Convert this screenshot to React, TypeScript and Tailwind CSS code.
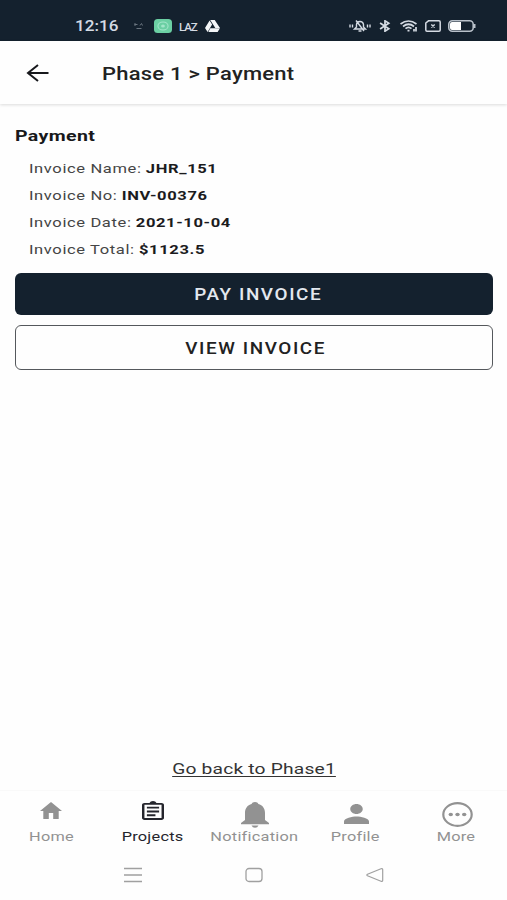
import type { ReactNode } from "react";

interface TabProps {
  label: string;
  active?: boolean;
  children: ReactNode;
}

const Tab = ({ label, active, children }: TabProps) => {
  return (
    <button
      className={`flex flex-1 flex-col items-center ${active ? "text-[#24252c]" : "text-[#929292]"}`}
    >
      <span className="flex h-[25px] items-start justify-center">{children}</span>
      <span className="flex h-5 w-full justify-center">
        <span className="scale-x-[1.21] text-[13.5px] leading-5 tracking-[0.2px] whitespace-nowrap">
          {label}
        </span>
      </span>
    </button>
  );
};

const details = [
  { label: "Invoice Name:", value: "JHR_151" },
  { label: "Invoice No:", value: "INV-00376" },
  { label: "Invoice Date:", value: "2021-10-04" },
  { label: "Invoice Total:", value: "$1123.5" },
];

const StatusBar = () => {
  return (
    <div className="flex h-[41px] items-center bg-[#14212e] pt-[11px] pl-[75px] text-[#d5dbe3]">
      <span className="w-[58px]">
        <span className="inline-block origin-left scale-x-[1.18] text-[14.5px] leading-none font-medium">
          12:16
        </span>
      </span>
      <svg className="h-2 w-3" viewBox="0 0 12 8" fill="none" stroke="#69747f">
        <path d="M1.5 2.5h3M2 1v3M7 3.5l1.500-2 1 2M3.500 6.500h5" />
      </svg>
      <svg className="ml-[9px] h-[14px] w-[18px]" viewBox="0 0 17 14" preserveAspectRatio="none">
        <rect width="17" height="14" rx="3.5" fill="#6bcfa3" />
        <ellipse cx="8.5" cy="7" rx="4.800" ry="4" fill="none" stroke="#a2e6ca" />
        <ellipse cx="8.5" cy="7" rx="1.800" ry="1.500" fill="#a2e6ca" />
      </svg>
      <span className="ml-[7px] w-[18px]">
        <span className="inline-block origin-left scale-x-[1.1] text-[10.500px] leading-none font-medium tracking-[-1px]">
          LAZ
        </span>
      </span>
      <svg className="ml-[8px] h-3 w-[15px]" viewBox="0 0 15 12" fill="#f4f6f8">
        <path d="M5.200 0h4.500L15 8h-4.700zM4.600.6l2.500 4L2.600 12 0 8.100zM5.300 8.300H15L12.600 12H3.400z" />
      </svg>
      <svg
        className="ml-[129px] h-3 w-[22px]"
        viewBox="0 0 22 12"
        fill="none"
        stroke="currentColor"
        strokeWidth="1.400"
      >
        <path d="M1 4.500v3M3.500 4.500v3M21 4.500v3M18.500 4.500v3M5.500 9h11L14.500 7V4.500Q14 1.500 11 1.500T7.500 4.500V7zM9.500 11h3M7 .5l8 10.500" />
      </svg>
      <svg
        className="ml-[8px] h-3 w-[12px]"
        viewBox="0 0 11 12"
        preserveAspectRatio="none"
        fill="none"
        stroke="currentColor"
        strokeWidth="1.600"
      >
        <path d="M1 3l8 5.800L5.500 11.200V.8L9 3.200 1 9" />
      </svg>
      <svg
        className="ml-[9px] h-3 w-[18px]"
        viewBox="0 0 18 12"
        fill="none"
        stroke="currentColor"
        strokeWidth="1.700"
      >
        <path d="M.5 4Q8.500-2 16.500 4M3 6.500Q8.500 2 14 6.500M5.500 8.700Q8.500 6 11.500 8.700" />
        <path d="M7.500 10.700h2M16 7v4.500M14 9v2.500" />
      </svg>
      <svg
        className="ml-[7px] h-3 w-4"
        viewBox="0 0 16 12"
        fill="none"
        stroke="currentColor"
        strokeWidth="1.500"
      >
        <path d="M3.500.8H14q1.200 0 1.200 1.200v8q0 1.200-1.200 1.200H2q-1.200 0-1.200-1.200V3zM6.300 4.500l3.400 3M9.700 4.500l-3.400 3" />
      </svg>
      <svg className="ml-[7px] h-3 w-7" viewBox="0 0 28 12" fill="none">
        <rect x=".8" y=".8" width="24.400" height="10.400" rx="3.500" stroke="#b9c1ca" strokeWidth="1.600" />
        <path d="M4 2h9v8H4q-2 0-2-2V4q0-2 2-2z" fill="#fff" />
        <path d="M26.600 4v4" stroke="#b9c1ca" strokeWidth="1.800" />
      </svg>
    </div>
  );
};

const Header = () => {
  return (
    <header className="flex h-[63px] items-center pl-[26px] shadow-[0_1px_3px_rgba(0,0,0,0.14)]">
      <svg
        className="h-[18px] w-[23px]"
        viewBox="0 0 23 18"
        fill="none"
        stroke="#17181c"
        strokeWidth="2"
      >
        <path d="M22.500 9H2M12 1L2 9l10 8" />
      </svg>
      <h1 className="ml-[53px] origin-left scale-x-[1.220] pt-px text-[18px] font-medium tracking-[0.200px] whitespace-nowrap text-[#222]">
        Phase 1 &gt; Payment
      </h1>
    </header>
  );
};

const TabBar = () => {
  return (
    <nav className="flex h-[60px] border-t border-[#f9f9f9] pt-[10px] pl-px">
      <Tab label="Home">
        <svg className="mt-px mr-px h-[17px] w-[22px]" viewBox="2 3 20 17" preserveAspectRatio="none" fill="currentColor">
          <path d="M10 20v-6h4v6h5v-8h3L12 3 2 12h3v8z" />
        </svg>
      </Tab>
      <Tab label="Projects" active>
        <svg className="h-[19px] w-[22px]" viewBox="3 1 18 20" preserveAspectRatio="none" fill="currentColor">
          <path d="M7 15h7v2H7zm0-4h10v2H7zm0-4h10v2H7zm12-4h-4.180C14.400 1.840 13.300 1 12 1s-2.400.84-2.820 2H5c-1.100 0-2 .9-2 2v14c0 1.100.9 2 2 2h14c1.100 0 2-.9 2-2V5c0-1.100-.9-2-2-2zm0 16H5V5h14z" />
        </svg>
      </Tab>
      <Tab label="Notification">
        <svg className="mt-px ml-[2px] h-[26px] w-[28px]" viewBox="0 0 28 26" fill="currentColor">
          <path d="M14 0c1.800 0 3 .8 3.400 2C21.500 3 24 6.500 24 11v7l4 3v1.300H0V21l4-3v-7c0-4.500 2.500-8 6.600-9 .4-1.200 1.600-2 3.400-2z" />
          <path d="M10.500 23.500h7q-1 2.300-3.500 2.300t-3.500-2.300z" />
        </svg>
      </Tab>
      <Tab label="Profile">
        <svg className="mt-[3px] ml-[2px] h-5 w-[25px]" viewBox="4 4 16 16" preserveAspectRatio="none" fill="currentColor">
          <path d="M12 12c2.210 0 4-1.790 4-4s-1.790-4-4-4-4 1.790-4 4 1.790 4 4 4zm0 2c-2.670 0-8 1.340-8 4v2h16v-2c0-2.660-5.330-4-8-4z" />
        </svg>
      </Tab>
      <Tab label="More">
        <svg className="mt-px ml-[3px] h-[25px] w-[31px]" viewBox="0 0 31 25" fill="none">
          <ellipse cx="15.500" cy="12.500" rx="14.200" ry="11.300" stroke="currentColor" strokeWidth="2.200" />
          <g fill="currentColor">
            <ellipse cx="8.800" cy="12.500" rx="2.200" ry="1.800" />
            <ellipse cx="15.500" cy="12.500" rx="2.200" ry="1.800" />
            <ellipse cx="22.200" cy="12.500" rx="2.200" ry="1.800" />
          </g>
        </svg>
      </Tab>
    </nav>
  );
};

const SystemNav = () => {
  return (
    <div className="flex h-[50px] items-center justify-center gap-[103px] text-[#a0a0a0]">
      <svg className="h-4 w-[18px]" viewBox="0 0 18 16" fill="none" stroke="currentColor" strokeWidth="1.300">
        <path d="M0 1.500h18M0 8h18M0 14.500h18" />
      </svg>
      <svg className="h-4 w-[18px]" viewBox="0 0 18 16" fill="none" stroke="currentColor" strokeWidth="1.300">
        <rect x="1" y="1.500" width="16" height="13" rx="3" />
      </svg>
      <svg className="h-4 w-[18px]" viewBox="0 0 18 16" fill="none" stroke="currentColor" strokeWidth="1.200">
        <path d="M1.500 7.200L15 1.700q1.700-.6 1.700 1v10.600q0 1.600-1.700 1L1.500 8.800q-1.300-.8 0-1.600z" />
      </svg>
    </div>
  );
};

const App = () => {
  return (
    <div className="flex h-[900px] w-[507px] flex-col overflow-hidden bg-[#fefefe] font-['Roboto','Liberation_Sans',sans-serif]">
      <StatusBar />
      <Header />
      <main className="flex flex-1 flex-col pt-[22px] pr-[14px] pl-[15px]">
        <h2 className="origin-left scale-x-[1.260] text-[15.500px] leading-5 font-bold tracking-[0.300px] text-[#17181a]">
          Payment
        </h2>
        <dl className="mt-[9px] ml-[14px] text-[13.500px] leading-[27px]">
          {details.map(({ label, value }) => (
            <div
              key={label}
              className="flex w-max origin-left scale-x-[1.225] gap-[3.500px] tracking-[0.500px]"
            >
              <dt className="text-[#454545]">{label}</dt>
              <dd className="font-bold text-[#1b1b1d]">{value}</dd>
            </div>
          ))}
        </dl>
        <button className="mt-[10px] flex h-[42px] items-center justify-center rounded-[6px] bg-[#14212e] pt-[2px] pl-[9px] text-[#e3e8ef]">
          <span className="scale-x-[1.180] text-[16px] font-medium tracking-[1.350px]">PAY INVOICE</span>
        </button>
        <button className="mt-[10px] flex h-[45px] items-center justify-center rounded-[6px] border-[1.500px] border-[#55585c] pt-[3px] pl-[4px] text-[#222]">
          <span className="scale-x-[1.180] text-[16px] font-medium tracking-[1.350px]">VIEW INVOICE</span>
        </button>
        <a
          href="#phase-1"
          className="mx-auto mt-auto mb-[11px] scale-x-[1.240] text-[15.500px] leading-5 tracking-[0.150px] text-[#333] underline underline-offset-2"
        >
          Go back to Phase1
        </a>
      </main>
      <TabBar />
      <SystemNav />
    </div>
  );
};

export default App;
